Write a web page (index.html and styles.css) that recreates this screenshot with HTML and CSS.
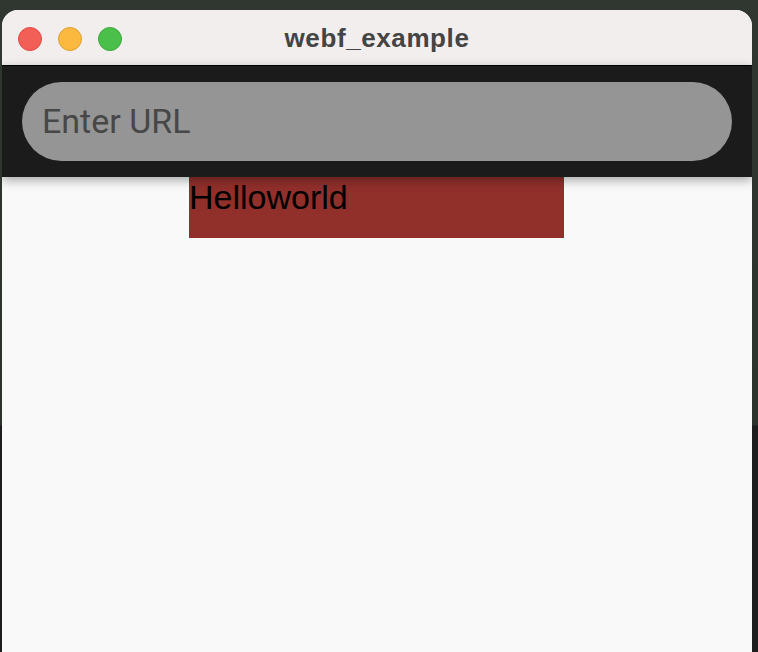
FILE: index.html
```html
<!DOCTYPE html>
<html>
<head>
<meta charset="utf-8">
<link rel="stylesheet" href="styles.css">
</head>
<body>
<div class="window">
  <div class="titlebar">
    <div class="lights">
      <span class="light red"></span>
      <span class="light yellow"></span>
      <span class="light green"></span>
    </div>
    <div class="title">webf_example</div>
  </div>
  <div class="toolbar">
    <div class="url">Enter URL</div>
  </div>
  <div class="content">
    <div class="hello">Helloworld</div>
  </div>
</div>
</body>
</html>
```
FILE: styles.css
```css
html, body {
  margin: 0;
  padding: 0;
  width: 758px;
  height: 652px;
  overflow: hidden;
}
body {
  background: linear-gradient(#303630 0, #2c332d 425px, #1e1e1e 426px, #1e1e1e 100%);
  font-family: "Liberation Sans", Arial, sans-serif;
}
.window {
  margin: 10px 0 0 2px;
  width: 750px;
  height: 642px;
  border-radius: 16px 16px 0 0;
  overflow: hidden;
  background: #f9f9f9;
  display: flex;
  flex-direction: column;
}
.titlebar {
  position: relative;
  height: 55px;
  background: #f1eeed;
  border-bottom: 1px solid #000;
  display: flex;
  align-items: center;
  flex-shrink: 0;
}
.lights {
  display: flex;
  gap: 16px;
  padding-left: 16px;
  padding-top: 2px;
}
.light {
  width: 24px;
  height: 24px;
  border-radius: 50%;
  box-sizing: border-box;
}
.red { background: #f25f57; border: 1px solid #df4b44; }
.yellow { background: #fbb93f; border: 1px solid #e0a130; }
.green { background: #4abf4a; border: 1px solid #3ba93b; }
.title {
  position: absolute;
  left: 0;
  right: 0;
  top: 0;
  bottom: 0;
  display: flex;
  align-items: center;
  justify-content: center;
  font-weight: bold;
  font-size: 26px;
  letter-spacing: 0.6px;
  color: #444;
  padding-top: 1px;
  pointer-events: none;
}
.toolbar {
  position: relative;
  z-index: 2;
  background: #1b1b1b;
  padding: 16px 20px;
  box-shadow: 0 3px 10px rgba(0,0,0,0.35);
  flex-shrink: 0;
}
.url {
  height: 79px;
  border-radius: 40px;
  background: #959595;
  color: #474747;
  font-family: Roboto, "Liberation Sans", sans-serif;
  font-size: 34px;
  display: flex;
  align-items: center;
  padding-left: 20px;
  padding-bottom: 2px;
  box-sizing: border-box;
}
.content {
  flex: 1;
  display: flex;
  justify-content: center;
  align-items: flex-start;
}
.hello {
  width: 375px;
  height: 61px;
  background: #912f2b;
  color: #000;
  font-family: "Liberation Sans", Arial, sans-serif;
  font-size: 34px;
  line-height: 40px;
  margin-left: -1px;
}
```
